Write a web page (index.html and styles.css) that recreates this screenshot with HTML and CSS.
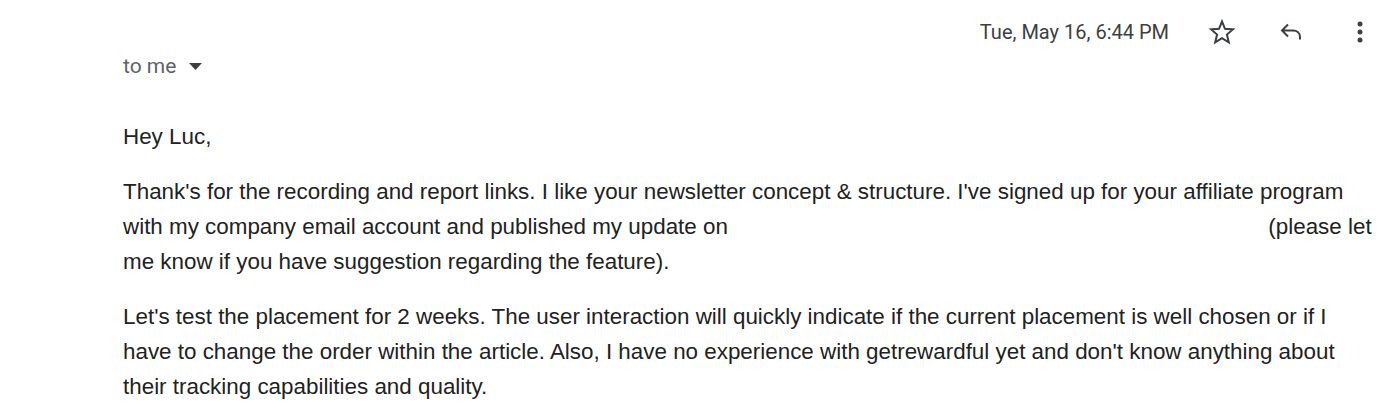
FILE: index.html
```html
<!DOCTYPE html>
<html>
<head>
<meta charset="utf-8">
<link rel="stylesheet" href="styles.css">
</head>
<body>
<div class="mail">
  <div class="header">
    <span class="date">Tue, May 16, 6:44 PM</span>
    <span class="icon star">
      <svg width="28" height="28" viewBox="0 0 28 28"><path fill="none" stroke="#3c4043" stroke-width="2" stroke-linejoin="miter" d="M14 3.5l3 7.3 7.9.6-6 5.2 1.9 7.7L14 20.1l-6.8 4.2 1.9-7.7-6-5.2 7.9-.6z"/></svg>
    </span>
    <span class="icon reply">
      <svg width="28" height="28" viewBox="0 0 28 28"><path fill="none" stroke="#3c4043" stroke-width="2" d="M10 6.5l-6 6 6 6M4 12.5h11c4 0 7 2.5 7 6.5v2.5"/></svg>
    </span>
    <span class="icon more">
      <svg width="28" height="28" viewBox="0 0 28 28"><circle cx="14" cy="6" r="2.5" fill="#3c4043"/><circle cx="14" cy="14" r="2.5" fill="#3c4043"/><circle cx="14" cy="22" r="2.5" fill="#3c4043"/></svg>
    </span>
  </div>
  <div class="to">
    <span>to me</span>
    <svg class="caret" width="13" height="7" viewBox="0 0 13 7"><path d="M0 0h13L6.5 7z" fill="#3c4043"/></svg>
  </div>
  <div class="body">
    <p>Hey Luc,</p>
    <p>Thank's for the recording and report links. I like your newsletter concept &amp; structure. I've signed up for your affiliate program with my company email account and published my update on <span class="redacted"></span> (please let me know if you have suggestion regarding the feature).</p>
    <p>Let's test the placement for 2 weeks. The user interaction will quickly indicate if the current placement is well chosen or if I have to change the order within the article. Also, I have no experience with getrewardful yet and don't know anything about their tracking capabilities and quality.</p>
  </div>
</div>
</body>
</html>
```
FILE: styles.css
```css
html, body { margin: 0; padding: 0; background: #fff; }
.mail { padding: 0 22px 0 123px; font-family: "Liberation Sans", Arial, sans-serif; }
.header {
  display: flex;
  align-items: center;
  justify-content: flex-end;
  height: 32px;
  padding-top: 16px;
  margin-right: 4px;
}
.date {
  font-family: Roboto, "Liberation Sans", sans-serif;
  font-size: 20px;
  color: #3c4043;
  margin-right: 39px;
}
.icon { display: flex; width: 28px; height: 28px; }
.star { margin-right: 42px; }
.reply { margin-right: 40px; }
.to {
  display: flex;
  align-items: center;
  height: 26px;
  margin-top: 5px;
  font-family: Roboto, "Liberation Sans", sans-serif;
  font-size: 21px;
  color: #5f6368;
}
.caret { margin-left: 13px; }
.body { margin-top: 40px; color: #222; font-size: 22.4px; line-height: 35px; }
.body p { margin: 0 0 20px 0; }
.redacted { display: inline-block; width: 528px; height: 1px; }
```
